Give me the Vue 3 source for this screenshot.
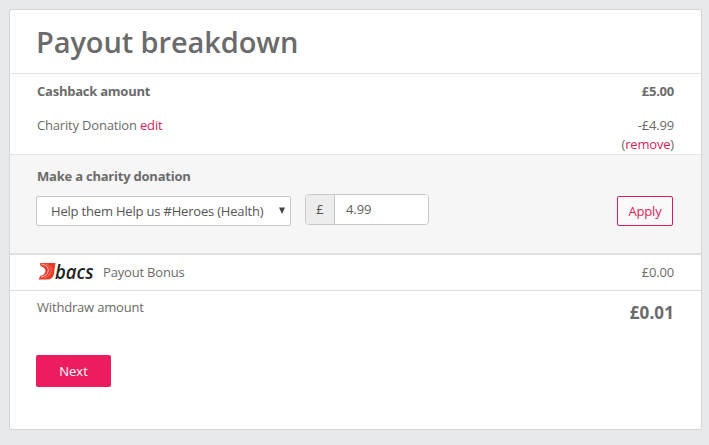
<script setup>
import { ref } from "vue";

const charity = ref("Help them Help us #Heroes (Health)");
const donation = ref("4.99");
</script>

<template>
  <div class="page">
    <section class="card">
      <h1 class="title">Payout breakdown</h1>

      <div class="amounts">
        <div class="row total">
          <span>Cashback amount</span>
          <span>£5.00</span>
        </div>
        <div class="row">
          <span>Charity Donation <a class="link">edit</a></span>
          <span class="right">-£4.99<br />(<a class="link">remove</a>)</span>
        </div>
      </div>

      <div class="donation">
        <h2 class="donation-title">Make a charity donation</h2>
        <div class="donation-form">
          <button type="button" class="select">
            <span class="select-text">{{ charity }}</span>
            <svg class="arrow" width="6" height="7" viewBox="0 0 6 7">
              <path d="M0 0.5H6L3 7Z" fill="#444" />
            </svg>
          </button>
          <div class="input-group">
            <span class="addon">£</span>
            <input v-model="donation" class="input" type="text" />
          </div>
          <button type="button" class="apply">Apply</button>
        </div>
      </div>

      <div class="bonus">
        <svg class="bacs" width="58" height="26" viewBox="0 0 58 26">
          <path d="M2 4H17.500L15.800 15.500Q14.500 20.500 9 20.500H0.600L2.200 17Q6.500 16 7.400 12.500Q8 8.500 2.400 7Z" fill="#ea3a28" />
          <path d="M3.500 5Q11 6.500 10.300 12Q9.500 16.500 3 18.200" fill="none" stroke="#fff" stroke-width="0.7" />
          <path d="M8 5Q14 8 13 12.500Q12 17 6.500 18.800" fill="none" stroke="#fbb5a8" stroke-width="0.5" />
          <text class="bacs-text" x="17" y="20" textLength="38.500" lengthAdjust="spacingAndGlyphs">bacs</text>
        </svg>
        <span class="bonus-label">Payout Bonus</span>
        <span>£0.00</span>
      </div>

      <div class="withdraw">
        <span>Withdraw amount</span>
        <strong class="withdraw-amount">£0.01</strong>
      </div>

      <button type="button" class="next">Next</button>
    </section>
  </div>
</template>

<style>
body {
  background: #e8e9eb;
}
</style>

<style scoped>
.page {
  box-sizing: border-box;
  height: 445px;
  padding: 9px 7px 15px 9px;
  font-family: "Open Sans", "Noto Sans", sans-serif;
  font-size: 13px;
  line-height: 19px;
  letter-spacing: -0.18px;
  color: #6b6b6b;
}

.card {
  box-sizing: border-box;
  height: 421px;
  border: 1px solid #d4d5d7;
  border-radius: 3px;
  background: #fff;
}

.title {
  box-sizing: border-box;
  height: 64px;
  margin: 0;
  padding: 12px 26px 0;
  border-bottom: 1px solid #e3e4e6;
  font-size: 29px;
  font-weight: 600;
  line-height: 40px;
  letter-spacing: -0.1px;
}

.amounts {
  box-sizing: border-box;
  height: 81px;
  padding: 8px 27px 0 27px;
  border-bottom: 1px solid #e6e6e8;
}

.row {
  display: flex;
  justify-content: space-between;
}

.total {
  margin-bottom: 15px;
  font-weight: 700;
  letter-spacing: -0.24px;
}

.right {
  text-align: right;
}

.link {
  color: #d91e5b;
  cursor: pointer;
}

.donation {
  box-sizing: border-box;
  height: 100px;
  padding: 12px 28px 0 26px;
  border-bottom: 2px solid #dfdfe1;
  background: #f6f6f6;
}

.donation-title {
  margin: 0 0 8px 1px;
  font-size: 13px;
  font-weight: 700;
  letter-spacing: -0.22px;
}

.donation-form {
  display: flex;
  align-items: flex-start;
}

.select {
  display: flex;
  align-items: center;
  justify-content: space-between;
  box-sizing: border-box;
  width: 255px;
  height: 30px;
  margin-top: 2px;
  padding: 0 5px 0 14px;
  border: 1px solid #c8c8c8;
  border-radius: 2px;
  background: #fff;
  font: inherit;
  letter-spacing: -0.19px;
  color: #555;
}

.arrow {
  margin-bottom: 2px;
}

.input-group {
  display: flex;
  box-sizing: border-box;
  width: 124px;
  height: 31px;
  margin-left: 14px;
  border: 1px solid #c8c8c8;
  border-radius: 4px;
  background: #fff;
  overflow: hidden;
}

.addon {
  width: 28px;
  border-right: 1px solid #c8c8c8;
  background: #ededed;
  line-height: 28px;
  text-align: center;
  color: #555;
}

.input {
  flex: 1;
  min-width: 0;
  padding: 0 11px;
  border: 0;
  outline: 0;
  font: inherit;
  letter-spacing: -0.1px;
  color: #5f5f5f;
}

.apply {
  box-sizing: border-box;
  width: 56px;
  height: 30px;
  margin: 2px 0 0 auto;
  padding: 0;
  border: 1px solid #d91e5b;
  border-radius: 2px;
  background: #f9f9f9;
  font: inherit;
  letter-spacing: -0.18px;
  color: #d91e5b;
}

.bonus {
  display: flex;
  align-items: center;
  box-sizing: border-box;
  height: 36px;
  padding: 0 27px 1px 28px;
  border-bottom: 1px solid #dcdcdf;
}

.bacs-text {
  font-family: "Open Sans", sans-serif;
  font-size: 19px;
  font-style: italic;
  font-weight: 600;
  letter-spacing: 0;
  fill: #222;
}

.bonus-label {
  flex: 1;
  margin-left: 7px;
}

.withdraw {
  display: flex;
  justify-content: space-between;
  box-sizing: border-box;
  height: 64px;
  padding: 7px 27px 0 27px;
}

.withdraw-amount {
  margin-top: 5px;
  font-size: 17px;
  letter-spacing: 0.1px;
}

.next {
  display: block;
  width: 75px;
  height: 32px;
  margin-left: 26px;
  padding: 0;
  border: 0;
  border-radius: 2px;
  background: #ed1c5f;
  font: inherit;
  color: #fff;
}
</style>
